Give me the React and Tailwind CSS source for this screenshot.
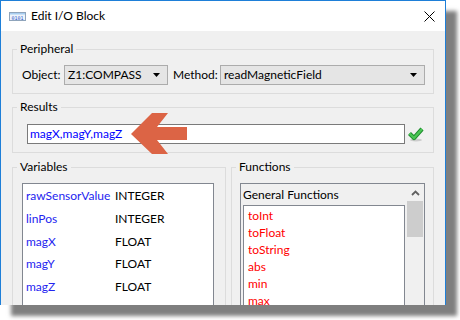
import React from "react";

const variables = [
  { name: "rawSensorValue", type: "INTEGER" },
  { name: "linPos", type: "INTEGER" },
  { name: "magX", type: "FLOAT" },
  { name: "magY", type: "FLOAT" },
  { name: "magZ", type: "FLOAT" },
];

const functions = ["toInt", "toFloat", "toString", "abs", "min", "max"];

function DropArrow() {
  return (
    <svg width="8" height="5" viewBox="0 0 8 5">
      <path d="M0 0 H7 L3.5 4 Z" fill="#000" />
    </svg>
  );
}

function Combo({ value, className }) {
  return (
    <div
      className={`h-[20px] flex items-center justify-between border border-[#acacac] bg-[#e5e5e5] pl-[3px] pr-[6px] ${className}`}
    >
      <span>{value}</span>
      <DropArrow />
    </div>
  );
}

function GroupBox({ title, className, children }) {
  return (
    <fieldset className={`border border-[#dcdcdc] ${className}`}>
      <legend className="ml-[4px] px-[3px] leading-[16px]">{title}</legend>
      {children}
    </fieldset>
  );
}

export default function App() {
  return (
    <div className="relative w-[460px] h-[320px] bg-white font-['Lato',sans-serif] text-[12px] text-black">
      {/* dialog window */}
      <div className="w-[446px] h-[305px] flex flex-col overflow-hidden border-x border-t border-[#1e7fd8] bg-[#f0f0f0] shadow-[11px_11px_4px_rgba(0,0,0,0.5)]">
        {/* title bar */}
        <div className="h-[30px] shrink-0 bg-white flex items-center pl-[8px] pr-[10px]">
          <svg width="17" height="9" viewBox="0 0 17 9" className="mt-[1px]">
            <rect x="0.5" y="0.5" width="16" height="8" fill="#eef4fb" stroke="#8fa4bb" />
            <rect x="1" y="1" width="15" height="1.5" fill="#a8cdf0" />
            <text x="8.5" y="7.6" fontSize="5" textAnchor="middle" fill="#2a52c8" fontFamily="DejaVu Sans Mono, monospace">
              0101
            </text>
          </svg>
          <span className="ml-[5px] text-[12px]">Edit I/O Block</span>
          <svg width="11" height="11" viewBox="0 0 11 11" className="ml-auto">
            <path d="M0.5 0.5 L10.5 10.5 M10.5 0.5 L0.5 10.5" stroke="#000" strokeWidth="1" />
          </svg>
        </div>

        <div className="flex flex-col px-[11px]">
          <GroupBox title="Peripheral" className="mt-[10px]">
            <div className="flex items-center pt-[8px] pb-[8px] pl-[9px] pr-[8px]">
              <span className="w-[42px]">Object:</span>
              <Combo value="Z1:COMPASS" className="w-[104px]" />
              <span className="w-[52px] pl-[5px]">Method:</span>
              <Combo value="readMagneticField" className="flex-1" />
            </div>
          </GroupBox>

          <GroupBox title="Results" className="mt-[5px]">
            <div className="flex items-center pt-[9px] pb-[8px] pl-[14px]">
              <div className="w-[378px] h-[20px] flex items-center border border-[#7a7a7a] bg-white pl-[2px] text-[#0000ff]">
                magX,magY,magZ
              </div>
              <svg width="18" height="16" viewBox="0 0 18 16" className="ml-[2px]">
                <ellipse cx="9" cy="14" rx="6" ry="1.5" fill="#000" opacity="0.15" />
                <path d="M2.5 7.5 L7 12 L15 3" fill="none" stroke="#1d8a2c" strokeWidth="4.2" strokeLinejoin="round" />
                <path d="M2.5 7.5 L7 12 L15 3" fill="none" stroke="#49c553" strokeWidth="2.4" />
              </svg>
            </div>
          </GroupBox>

          <div className="flex gap-[5px] mt-[6px] shrink-0">
            <GroupBox title="Variables" className="w-[214px] h-[170px]">
              <div className="pt-[8px] pl-[9px] pr-[11px] h-full">
                <div className="h-full border border-[#828790] bg-white pt-[1px] pl-[3px]">
                  {variables.map((v) => (
                    <div key={v.name} className="h-[22.7px] flex items-center">
                      <span className="w-[89px] text-[#2424f0]">{v.name}</span>
                      <span>{v.type}</span>
                    </div>
                  ))}
                </div>
              </div>
            </GroupBox>

            <GroupBox title="Functions" className="flex-1 h-[170px]">
              <div className="pt-[8px] pl-[8px] pr-[8px] h-full">
                <div className="h-full flex border border-[#828790] bg-[#f0f0f0]">
                  <div className="w-[164px] pl-[2px] flex flex-col">
                    <div className="h-[21px] shrink-0 flex items-center">General Functions</div>
                    <div className="flex-1 border border-[#828790] bg-white pt-[1.5px] pl-[4px]">
                      {functions.map((f) => (
                        <div key={f} className="h-[17px] flex items-center text-[#ff0000]">
                          {f}
                        </div>
                      ))}
                    </div>
                  </div>
                  <div className="ml-[2px] w-[16px] flex flex-col">
                    <div className="h-[17px] flex items-center justify-center">
                      <svg width="9" height="6" viewBox="0 0 9 6">
                        <path d="M1 5 L4.5 1.5 L8 5" fill="none" stroke="#606060" strokeWidth="1.8" />
                      </svg>
                    </div>
                    <div className="h-[36px] bg-[#cdcdcd]" />
                  </div>
                </div>
              </div>
            </GroupBox>
          </div>
        </div>
      </div>

      {/* annotation arrow */}
      <svg
        width="460"
        height="320"
        viewBox="0 0 460 320"
        className="absolute left-0 top-0 pointer-events-none"
      >
        <polygon
          points="131,134 152,113 168,113 157,127 187,127 187,140 157,140 168,154 152,154"
          fill="#dc6445"
        />
      </svg>
    </div>
  );
}
